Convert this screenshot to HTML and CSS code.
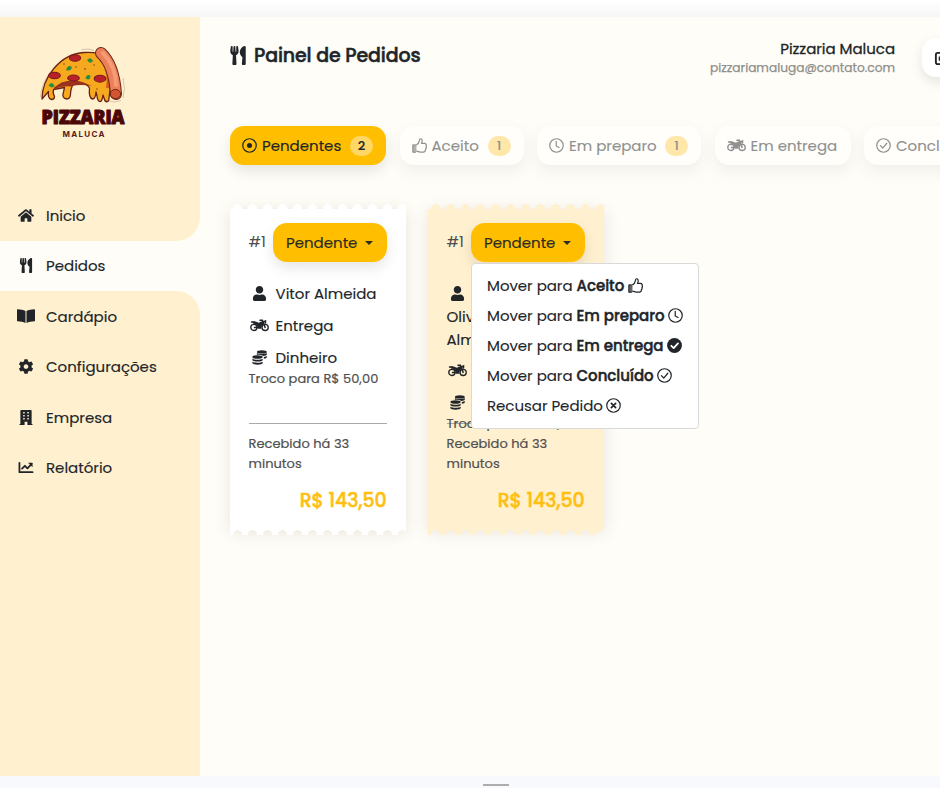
FILE: index.html
```html
<!DOCTYPE html>
<html lang="pt-BR">
<head>
<meta charset="utf-8">
<title>Painel de Pedidos</title>
<link rel="stylesheet" href="styles.css">
</head>
<body>
<svg class="sprite" aria-hidden="true">
  <symbol id="home" viewBox="0 0 576 512"><path d="M280.37 148.26L96 300.11V464a16 16 0 0 0 16 16l112.06-.29a16 16 0 0 0 15.92-16V368a16 16 0 0 1 16-16h64a16 16 0 0 1 16 16v95.64a16 16 0 0 0 16 16.05L464 480a16 16 0 0 0 16-16V300L295.67 148.26a12.19 12.19 0 0 0-15.3 0zM571.6 251.47L488 182.56V44.05a12 12 0 0 0-12-12h-56a12 12 0 0 0-12 12v72.61L318.47 43a48 48 0 0 0-61 0L4.34 251.47a12 12 0 0 0-1.6 16.9l25.5 31A12 12 0 0 0 45.15 301l235.22-193.74a12.19 12.19 0 0 1 15.3 0L530.9 301a12 12 0 0 0 16.9-1.6l25.5-31a12 12 0 0 0-1.7-16.93z"/></symbol>
  <symbol id="utensils" viewBox="0 0 416 512"><path d="M207.9 15.2c.8 4.7 16.1 94.5 16.1 128.8 0 52.3-27.8 89.6-68.9 104.6L168 486.7c.7 13.7-10.2 25.3-24 25.3H80c-13.7 0-24.7-11.5-24-25.3l12.9-238.1C27.7 233.6 0 196.2 0 144 0 109.6 15.3 19.9 16.1 15.2 19.3-5.1 61.4-5.4 64 16.3v141.2c1.3 3.4 15.1 3.2 16 0 1.4-25.3 7.9-139.2 8-141.8 3.3-20.8 44.7-20.8 47.9 0 .2 2.7 6.6 116.5 8 141.8.9 3.2 14.8 3.4 16 0V16.3c2.6-21.6 44.8-21.4 47.9-1.1zm119.2 285.7l-15 185.1c-1.2 14 9.900 26 23.900 26h56c13.300 0 24-10.700 24-24V24c0-13.200-10.700-24-24-24-82.500 0-221.400 178.500-64.900 300.900z"/></symbol>
  <symbol id="book" viewBox="0 0 18 16"><path d="M.6 1.300C3.600 1.400 6.500 1.900 8.500 3v12C6.300 13.800 3.500 13.400.6 13.300a.6.6 0 0 1-.6-.6V1.900a.6.6 0 0 1 .6-.6zM17.400 1.300c-3 .1-5.900.6-7.900 1.700v12c2.200-1.200 5-1.600 7.900-1.700a.6.6 0 0 0 .6-.6V1.900a.6.6 0 0 0-.6-.6z"/></symbol>
  <symbol id="cog" viewBox="0 0 512 512"><path d="M487.400 315.700l-42.600-24.600c4.300-23.200 4.300-47 0-70.200l42.600-24.600c4.900-2.800 7.100-8.600 5.500-14-11.100-35.600-30-67.800-54.700-94.600-3.800-4.100-10-5.100-14.800-2.300L380.800 110c-17.900-15.400-38.500-27.300-60.800-35.100V25.800c0-5.600-3.900-10.500-9.400-11.700-36.700-8.200-74.300-7.800-109.200 0-5.500 1.200-9.400 6.100-9.400 11.700V75c-22.200 7.900-42.800 19.800-60.800 35.100L88.700 85.500c-4.900-2.800-11-1.900-14.800 2.300-24.700 26.700-43.600 58.900-54.700 94.600-1.700 5.400.6 11.200 5.500 14L67.300 221c-4.300 23.200-4.300 47 0 70.200l-42.600 24.600c-4.900 2.800-7.100 8.600-5.500 14 11.100 35.600 30 67.800 54.700 94.600 3.800 4.100 10 5.100 14.800 2.300l42.600-24.600c17.900 15.400 38.500 27.300 60.800 35.100v49.200c0 5.600 3.900 10.500 9.400 11.700 36.700 8.200 74.300 7.800 109.200 0 5.500-1.200 9.400-6.100 9.400-11.700v-49.200c22.200-7.900 42.800-19.800 60.800-35.100l42.600 24.600c4.900 2.800 11 1.900 14.800-2.300 24.700-26.700 43.600-58.900 54.700-94.600 1.500-5.500-.7-11.300-5.600-14.100zM256 336c-44.100 0-80-35.900-80-80s35.900-80 80-80 80 35.900 80 80-35.900 80-80 80z"/></symbol>
  <symbol id="building" viewBox="0 0 14 16"><path fill-rule="evenodd" d="M.4 15H1V.8Q1 0 1.800 0h10.400q.8 0 .8.800V15h.6q.4 0 .4.400V16H8.500v-3.600h-3V16H0v-.6q0-.4.400-.4zM4 2v1.800h1.600V2zm4.400 0v1.800H10V2zM4 5.200V7h1.600V5.200zm4.400 0V7H10V5.200zM4 8.400v1.800h1.600V8.400zm4.400 0v1.800H10V8.400z"/></symbol>
  <symbol id="chart" viewBox="0 0 16 16"><path fill="none" stroke="currentColor" stroke-width="1.900" stroke-linejoin="round" stroke-linecap="round" d="M1 3v10h14M3.800 9.200l3-3 2.700 2.700 3.600-3.700"/><path d="M10.200 3h4.400q.4 0 .4.400v4.400z"/></symbol>
  <symbol id="user" viewBox="0 0 448 512"><path d="M224 256c70.700 0 128-57.300 128-128S294.700 0 224 0 96 57.300 96 128s57.300 128 128 128zm89.600 32h-16.700c-22.200 10.200-46.900 16-72.900 16s-50.600-5.800-72.900-16h-16.700C60.200 288 0 348.200 0 422.400V464c0 26.500 21.500 48 48 48h352c26.500 0 48-21.500 48-48v-41.600c0-74.200-60.200-134.400-134.400-134.400z"/></symbol>
  <symbol id="moto" viewBox="0 0 20 16"><g fill="none" stroke="currentColor"><circle cx="4" cy="10" r="3.300" stroke-width="1.400"/><circle cx="16" cy="10" r="3.300" stroke-width="1.400"/><path stroke-width="1.600" stroke-linecap="round" d="M10.500 2.300h2.600L16 10M12.500 5l3.900-1.800v2M1.500 4.300H5"/></g><path d="M2 4h4.300c1.400 0 1.900 1 2.900 1 1.200 0 1.400-1.400 2.800-1.400h2.100l1 2.800c-2.200.9-3.300 2.700-3.100 5.100H8.200C8.300 8.600 6.600 6.200 3.500 6.200zM4 9.200h4v1.600H4z"/></symbol>
  <symbol id="coins" viewBox="0 0 16 16"><ellipse cx="10.500" cy="2" rx="5.300" ry="1.800"/><path d="M5.200 3.300c2 1.300 8.600 1.300 10.600 0v1.500c0 .8-1.500 1.500-3.800 1.700-1.200-.9-3.800-1.500-6.800-1.300zM12.600 7.500c1.400-.2 2.600-.6 3.200-1.100v1.400c0 .7-1.300 1.300-3.200 1.600z"/><ellipse cx="5.900" cy="7.500" rx="5.500" ry="1.900"/><path d="M.4 9.300c2.200 1.500 8.800 1.500 11 0v1.400c0 2.200-11 2.200-11 0zM.4 12.400c2.200 1.500 8.800 1.500 11 0v1.500c0 2.300-11 2.300-11 0z"/></symbol>
  <symbol id="target" viewBox="0 0 16 16"><circle cx="8" cy="8" r="7.200" fill="none" stroke="currentColor" stroke-width="1.300"/><circle cx="8" cy="8" r="2.700"/></symbol>
  <symbol id="thumb" viewBox="0 0 16 16"><path d="M.5 7.200h3v8.300h-3z" fill-opacity=".7"/><path fill="none" stroke="currentColor" stroke-width="1.300" stroke-linejoin="round" d="M4.600 7.300C6.300 6.500 7.600 4.800 7.900 2.800c.1-1.200.5-2 1.300-2 1.300 0 1.800 1.300 1.600 2.700-.1.900-.4 1.700-.7 2.300h3.200c1.500 0 2.200 1.200 1.700 2.200.6.800.5 1.700-.2 2.300.4.900.1 1.700-.6 2.200.2 1.500-.6 2.500-2.100 2.500H9c-1.800 0-2.900-.7-4.400-1.100"/><path fill="none" stroke="currentColor" d="M.9 7.300h3.200v7.900H.9z"/></symbol>
  <symbol id="clock" viewBox="0 0 16 16"><g fill="none" stroke="currentColor" stroke-width="1.300" stroke-linecap="round"><circle cx="8" cy="8" r="7.200"/><path d="M7.700 3.500v5l3 1.700"/></g></symbol>
  <symbol id="check" viewBox="0 0 16 16"><g fill="none" stroke="currentColor" stroke-width="1.300" stroke-linecap="round" stroke-linejoin="round"><circle cx="8" cy="8" r="7.200"/><path d="M4.700 8.200L7.200 10.700l4.300-5.100"/></g></symbol>
  <symbol id="check-fill" viewBox="0 0 16 16"><circle cx="8" cy="8" r="7.900"/><path fill="none" stroke="#fff" stroke-width="1.900" stroke-linecap="round" stroke-linejoin="round" d="M4.600 8.300l2.500 2.500 4.600-5"/></symbol>
  <symbol id="cross" viewBox="0 0 16 16"><circle cx="8" cy="8" r="7.200" fill="none" stroke="currentColor" stroke-width="1.300"/><path fill="none" stroke="currentColor" stroke-width="1.800" stroke-linecap="round" d="M5.700 5.700l4.600 4.600M10.300 5.700l-4.600 4.600"/></symbol>
</svg>

<div class="topbar"></div>
<div class="app">
  <aside class="sidebar">
    <svg class="logo" viewBox="0 0 100 100" role="img" aria-label="Pizzaria Maluca">
      <path d="M5.500 57C6 48 10 38 19 27M46 10C51 8.500 55 9 59 10.500M88 38q3 11 0 20M72 60.500q8 3 14 0" fill="none" stroke="#c9b193" stroke-width=".7"/>
      <path d="M7 59C7 39 24 14 49 12.500c8-.5 17 1 21 4.500 7 12 6 28 4 41 0 5-4 5-5 0l-1-3q-1 7-3 6.500-2.500 0-3-5.500l-1-4q-.5 7-3.500 7-4-1-3-11-5-8-17-3-2 5-2 9 0 5-4 5-5-1-3-7l1-4.500-11 2q-1 4 1 7 0 3-3 3-4-1-3-8z" fill="#f6a91f" stroke="#682314" stroke-width="1.300" stroke-linejoin="round"/>
      <path d="M19 47.500q12-10 28-5.500l10 4q-13-2-21 .5-9-1-17 3z" fill="#9b321d"/>
      <path d="M69 21q6 14 3.500 27" stroke="#d65a21" stroke-width="3" fill="none"/>
      <g fill="#b82129" stroke="#7b171b" stroke-width="1.100"><ellipse cx="40" cy="18" rx="5.600" ry="3.200"/><ellipse cx="19.500" cy="35.500" rx="5.800" ry="3.200"/><ellipse cx="38.500" cy="38" rx="5.800" ry="3"/><ellipse cx="65" cy="38.700" rx="5.800" ry="3.400"/></g>
      <g fill="#2c8c3c"><path d="M31 30q2-6 6-3-1 5-6 3M52 20q4-4 6 1-3 4-6-1M13.500 45.500q3-5 6 0-2 4-6 0M50.500 38.500q1-5 5-3 0 6-5 3"/></g>
      <g fill="#64361d"><circle cx="29" cy="24" r=".7"/><circle cx="50" cy="29" r=".8"/><circle cx="59" cy="25" r=".7"/><circle cx="41" cy="27" r=".7"/><circle cx="27" cy="43" r=".7"/><circle cx="62" cy="49" r=".7"/></g>
      <path d="M66 13Q79 25 81 54" fill="none" stroke="#692518" stroke-width="12" stroke-linecap="round"/>
      <path d="M66 13Q79 25 81 54" fill="none" stroke="#ec8059" stroke-width="10" stroke-linecap="round"/>
      <path d="M68 13Q81 27 81 45" fill="none" stroke="#f59c77" stroke-width="4" stroke-linecap="round"/>
      <ellipse cx="80.500" cy="54" rx="5.200" ry="4.600" fill="#d45630" stroke="#692518"/>
      <text class="logo-name" x="6.500" y="83.500" textLength="83" lengthAdjust="spacingAndGlyphs">PIZZARIA</text>
      <text class="logo-sub" x="27.500" y="96.600" textLength="42">MALUCA</text>
    </svg>
    <nav class="nav">
      <a class="nav-item before"><svg class="nav-icon"><use href="#home"/></svg><span>Inicio</span></a>
      <a class="nav-item active"><svg class="nav-icon"><use href="#utensils"/></svg><span>Pedidos</span></a>
      <a class="nav-item after"><svg class="nav-icon large"><use href="#book"/></svg><span>Cardápio</span></a>
      <a class="nav-item"><svg class="nav-icon"><use href="#cog"/></svg><span>Configurações</span></a>
      <a class="nav-item"><svg class="nav-icon"><use href="#building"/></svg><span>Empresa</span></a>
      <a class="nav-item"><svg class="nav-icon"><use href="#chart"/></svg><span>Relatório</span></a>
    </nav>
  </aside>
  <main class="main">
    <header class="header">
      <h1 class="title"><svg class="title-icon"><use href="#utensils"/></svg><span>Painel de Pedidos</span></h1>
      <div class="account"><div class="account-name">Pizzaria Maluca</div><div class="account-mail">pizzariamaluga@contato.com</div></div>
      <div class="logout"><svg class="logout-icon" viewBox="0 0 16 16"><path d="M11 2H4Q2 2 2 4v8q0 2 2 2h7M6 6h9M6 10h9M6 6v4" fill="none" stroke="currentColor" stroke-width="2"/></svg></div>
    </header>
    <div class="tabs">
      <div class="tab t1 current"><svg class="ic"><use href="#target"/></svg><span>Pendentes</span><b class="count">2</b></div>
      <div class="tab t2"><svg class="ic"><use href="#thumb"/></svg><span>Aceito</span><b class="count">1</b></div>
      <div class="tab t3"><svg class="ic"><use href="#clock"/></svg><span>Em preparo</span><b class="count">1</b></div>
      <div class="tab t4"><svg class="ic wide"><use href="#moto"/></svg><span>Em entrega</span></div>
      <div class="tab t5"><svg class="ic"><use href="#check"/></svg><span>Concluído</span></div>
    </div>
    <div class="cards">
      <article class="card">
        <div class="card-head"><span class="num">#1</span><button class="status">Pendente<i class="caret"></i></button></div>
        <div class="info">
          <p class="row"><svg class="row-icon"><use href="#user"/></svg>Vitor Almeida</p>
          <p class="row"><svg class="row-icon"><use href="#moto"/></svg>Entrega</p>
          <p class="row"><svg class="row-icon"><use href="#coins"/></svg>Dinheiro</p>
          <p class="small change">Troco para R$ 50,00</p>
        </div>
        <div class="foot"><p class="small">Recebido há 33 minutos</p><p class="price">R$ 143,50</p></div>
      </article>
      <article class="card tinted">
        <div class="card-head"><span class="num">#1</span><button class="status">Pendente<i class="caret"></i></button>
          <div class="menu">
            <div class="menu-item"><span>Mover para <b>Aceito</b></span><svg class="ic"><use href="#thumb"/></svg></div>
            <div class="menu-item"><span>Mover para <b>Em preparo</b></span><svg class="ic"><use href="#clock"/></svg></div>
            <div class="menu-item"><span>Mover para <b>Em entrega</b></span><svg class="ic"><use href="#check-fill"/></svg></div>
            <div class="menu-item"><span>Mover para <b>Concluído</b></span><svg class="ic"><use href="#check"/></svg></div>
            <div class="menu-item"><span>Recusar Pedido</span><svg class="ic"><use href="#cross"/></svg></div>
          </div>
        </div>
        <div class="info">
          <p class="row"><svg class="row-icon"><use href="#user"/></svg><br>Oliveira<br>Almeida</p>
          <p class="row"><svg class="row-icon"><use href="#moto"/></svg></p>
          <p class="row"><svg class="row-icon"><use href="#coins"/></svg></p>
          <p class="small change">Troco para R$ 50,00</p>
        </div>
        <div class="foot"><p class="small">Recebido há 33 minutos</p><p class="price">R$ 143,50</p></div>
      </article>
    </div>
  </main>
</div>
<footer class="bottombar"><div class="handle"></div></footer>
</body>
</html>
```
FILE: styles.css
```css
* { box-sizing: border-box; }
body {
  margin: 0;
  width: 940px;
  height: 788px;
  overflow: hidden;
  background: #f8f9fd;
  color: #212529;
  font-family: Poppins, Inter, sans-serif;
  font-size: 15px;
  line-height: 23px;
}
p, h1 { margin: 0; }
svg { fill: currentColor; flex: none; }
.sprite { display: none; }
.topbar { height: 17px; background: linear-gradient(#fff, #f6f6f7); }
.app { display: flex; height: 759px; background: #fffdf7; overflow: hidden; }
.sidebar { width: 200px; flex: none; background: #fffdf7; display: flex; flex-direction: column; }
.sidebar::after { content: ""; flex: 1; background: #fff0cf; }
.logo { width: 200px; height: 173px; padding: 23px 65px 50px 35px; background: #fff0cf; }
.logo-name { font: 800 20px "Open Sans", sans-serif; fill: #4b0707; stroke: #4b0707; stroke-width: 1.200; stroke-linejoin: round; }
.logo-sub { font: 700 8px Inter, sans-serif; fill: #5b2019; }
.nav-item { display: flex; align-items: center; height: 50.600px; padding-left: 18px; gap: 12px; background: #fff0cf; -webkit-text-stroke: .15px; }
.nav-icon { width: 16px; height: 15px; }
.nav-icon.large { width: 18px; height: 16px; margin: 0 -1px; }
.nav-item.active { background: #fffdf7; }
.nav-item.before { border-bottom-right-radius: 24px; }
.nav-item.after { border-top-right-radius: 24px; height: 50px; }
.main { flex: 1; min-width: 0; padding-left: 30px; }
.header { display: flex; height: 109px; padding-top: 21px; }
.title { display: flex; gap: 8px; height: 34px; align-items: center; font-size: 19px; font-weight: 500; -webkit-text-stroke: .5px; letter-spacing: -.14px; }
.title-icon { width: 16px; height: 19px; }
.account { margin-left: auto; text-align: right; }
.account-name { line-height: 22px; -webkit-text-stroke: .3px; letter-spacing: -.03px; }
.account-mail { font-size: 12.200px; line-height: 16px; color: #8e8e8c; -webkit-text-stroke: .25px; }
.logout { width: 50px; height: 39px; margin-left: 27px; margin-right: -32px; padding: 13px 12px; border-radius: 14px; background: #fff; box-shadow: 0 5px 12px rgba(0,0,0,.1); }
.logout-icon { width: 15px; height: 15px; display: block; }
.tabs { display: flex; gap: 13.500px; height: 39px; white-space: nowrap; }
.tab { flex: none; display: flex; align-items: center; gap: 5px; height: 39px; padding: 0 13px 0 12px; border-radius: 14px; background: #fff; color: #212529; box-shadow: 0 6px 14px rgba(0,0,0,.1); opacity: .5; -webkit-text-stroke: .15px; }
.tab.current { background: #ffbf00; opacity: 1; }
.t1 { width: 156px; } .t2 { width: 124px; } .t3 { width: 164px; } .t4 { width: 136px; } .t5 { width: 136px; }
.ic { width: 15px; height: 15px; }
.ic.wide { width: 19px; height: 15px; }
.count { margin-left: auto; width: 23px; height: 20px; border-radius: 10px; background: #ffd05d; font-size: 13px; font-weight: 500; line-height: 20px; text-align: center; }
.current .count { background: #ffd766; }
.cards { display: flex; gap: 22px; margin-top: 44px; }
.card { --paper: #fff; position: relative; width: 176px; height: 321px; padding: 14px 19.500px 0 18.500px; background: var(--paper); box-shadow: 0 2px 15px rgba(60,55,35,.13); }
.tinted { --paper: #fff0cf; }
.card::before, .card::after { content: ""; position: absolute; left: 0; right: 0; height: 5px; }
.card::before { top: -5px; background: radial-gradient(circle at 7.500px 5px, var(--paper) 4.500px, transparent 5px) 0 0 / 15px 5px; }
.card::after { bottom: -5px; background: radial-gradient(circle at 7.500px 5px, transparent 4.500px, var(--paper) 5px) 0 0 / 15px 5px; }
.card-head { position: relative; display: flex; justify-content: space-between; align-items: center; height: 39px; }
.num { color: #4d4d4d; margin-top: -2px; }
.status { width: 113.500px; height: 39px; padding: 0 0 0 13px; display: flex; align-items: center; gap: 8px; border: 0; border-radius: 14px; background: #ffbf00; color: #2b2b23; font: inherit; box-shadow: 0 6px 14px rgba(0,0,0,.1); -webkit-text-stroke: .15px; }
.caret { border: 4.500px solid transparent; border-top-color: currentColor; border-bottom: 0; }
.info { height: 162px; padding-top: 20px; border-bottom: 1px solid #aaa; -webkit-text-stroke: .15px; }
.row { height: 23px; margin-bottom: 9px; white-space: nowrap; }
.tinted .row:first-child { height: 68px; }
.row-icon { width: 19px; height: 15px; margin: 0 6.500px 0 1.500px; vertical-align: -2px; }
.small { font-size: 13px; line-height: 20px; color: #4f4f4f; white-space: normal; -webkit-text-stroke: .2px; letter-spacing: .03px; }
.change { margin-top: -9px; white-space: nowrap; }
.foot { padding-top: 10px; }
.price { margin-top: 12px; text-align: right; color: #ffbf10; font-size: 19px; font-weight: 500; line-height: 30px; letter-spacing: -.15px; -webkit-text-stroke: .5px; }
.menu { position: absolute; z-index: 2; left: 24.500px; top: 40px; width: 228px; height: 166px; padding: 7px 15px; border: 1px solid #d9d9d9; border-radius: 4px; background: #fff; -webkit-text-stroke: .1px; }
.menu-item { display: flex; align-items: center; gap: 3.500px; height: 29.900px; white-space: nowrap; letter-spacing: -.03px; }
.menu-item b { font-weight: 500; -webkit-text-stroke: .45px; }
.bottombar { height: 12px; padding: 8px 0 0 483px; }
.handle { width: 26px; height: 2px; background: #adadad; }
```
